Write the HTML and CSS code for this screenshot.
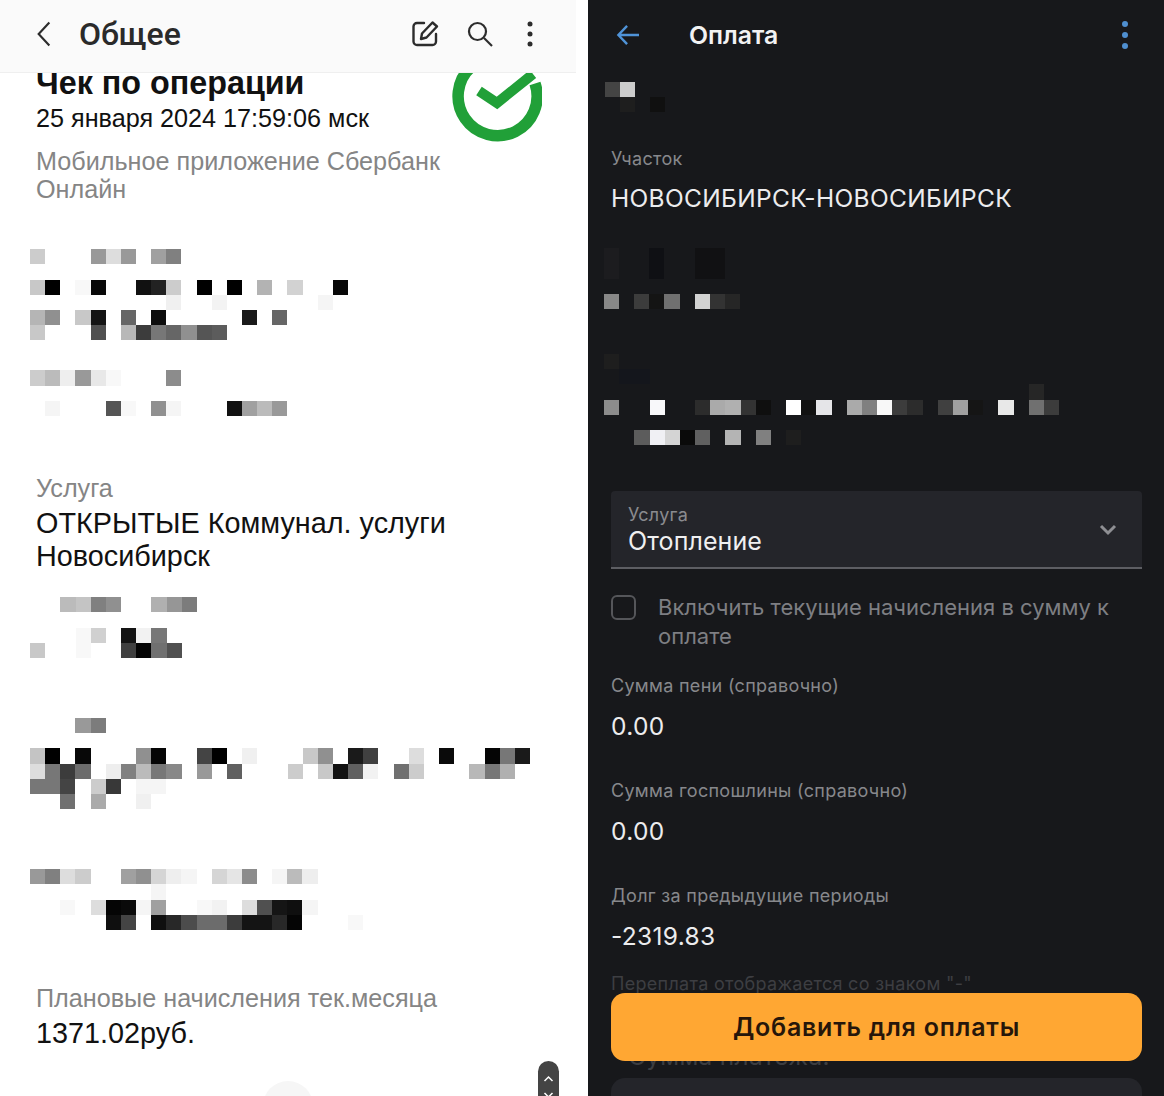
FILE: index.html
```html
<!DOCTYPE html>
<html lang="ru">
<head>
<meta charset="utf-8">
<title>Чек и оплата</title>
<link rel="stylesheet" href="styles.css">
</head>
<body>
<main class="split">
  <section class="light">
    <header class="light-bar">
      <svg class="ic-back" viewBox="0 0 18 30"><path d="M15 2 3 15l12 13" fill="none" stroke="#2c2c2c" stroke-width="2.4"/></svg>
      <h1 class="light-title">Общее</h1>
      <svg class="ic-edit" viewBox="0 0 28 28" fill="none" stroke="#2c2c2c" stroke-width="2.4" stroke-linejoin="round" stroke-linecap="round"><path d="M13 3H6A3.500 3.500 0 0 0 2.500 6.500v15A3.500 3.500 0 0 0 6 25h15.500a3.500 3.500 0 0 0 3.500-3.500V14"/><path d="M11 13.500 21.500 2.500l4.500 4L15.500 17.500 10 19z"/></svg>
      <svg class="ic-search" viewBox="0 0 26 26" fill="none" stroke="#2c2c2c" stroke-width="2.2"><circle cx="10.500" cy="10.500" r="8.500"/><path d="m17 17 8 8"/></svg>
      <svg class="ic-dots" viewBox="0 0 6 26" fill="#2c2c2c"><circle cx="3" cy="3" r="2.500"/><circle cx="3" cy="13" r="2.500"/><circle cx="3" cy="23" r="2.500"/></svg>
    </header>
    <div class="receipt">
      <div class="receipt-head">
        <div class="receipt-text">
          <h2 class="receipt-title">Чек по операции</h2>
          <p class="receipt-date">25 января 2024 17:59:06 мск</p>
        </div>
        <svg class="logo" viewBox="0 0 90 90" fill="none" stroke="#21a038"><path d="M83 31.500A39.500 39.500 0 1 1 19 15" stroke-width="11.500"/><path d="M27 39 45 51 81 22" stroke-width="10"/></svg>
      </div>
      <p class="muted source">Мобильное приложение Сбербанк Онлайн</p>
      <svg class="mosaic m1" viewBox="0 0 21 11" shape-rendering="crispEdges">
        <rect x="0" y="0" width="1" height="1" fill="#ccc"/><rect x="4" y="0" width="1" height="1" fill="#999"/><rect x="5" y="0" width="1" height="1" fill="#ddd"/><rect x="6" y="0" width="1" height="1" fill="#999"/><rect x="8" y="0" width="1" height="1" fill="#a0a0a0"/><rect x="9" y="0" width="1" height="1" fill="#808080"/>
        <rect x="0" y="2" width="1" height="1" fill="#c8c8c8"/><rect x="1" y="2" width="1" height="1" fill="#000"/><rect x="3" y="2" width="1" height="1" fill="#f8f8f8"/><rect x="4" y="2" width="1" height="1" fill="#080808"/><rect x="7" y="2" width="1" height="1" fill="#111"/><rect x="8" y="2" width="1" height="1" fill="#222"/><rect x="9" y="2" width="1" height="1" fill="#ccc"/><rect x="11" y="2" width="1" height="1" fill="#000"/><rect x="13" y="2" width="1" height="1" fill="#000"/><rect x="15" y="2" width="1" height="1" fill="#b3b3b3"/><rect x="17" y="2" width="1" height="1" fill="#d2d2d2"/><rect x="20" y="2" width="1" height="1" fill="#080808"/>
        <rect x="9" y="3" width="1" height="1" fill="#f0f0f0"/><rect x="12" y="3" width="1" height="1" fill="#f3f3f3"/><rect x="19" y="3" width="1" height="1" fill="#f5f5f5"/>
        <rect x="0" y="4" width="1" height="1" fill="#b5b5b5"/><rect x="1" y="4" width="1" height="1" fill="#909090"/><rect x="3" y="4" width="1" height="1" fill="#c8c8c8"/><rect x="4" y="4" width="1" height="1" fill="#141414"/><rect x="6" y="4" width="1" height="1" fill="#666"/><rect x="8" y="4" width="1" height="1" fill="#0d0d0d"/><rect x="14" y="4" width="1" height="1" fill="#1a1a1a"/><rect x="16" y="4" width="1" height="1" fill="#666"/>
        <rect x="0" y="5" width="1" height="1" fill="#c8c8c8"/><rect x="4" y="5" width="1" height="1" fill="#505050"/><rect x="6" y="5" width="1" height="1" fill="#b8b8b8"/><rect x="7" y="5" width="1" height="1" fill="#3c3c3c"/><rect x="8" y="5" width="1" height="1" fill="#777"/><rect x="9" y="5" width="1" height="1" fill="#666"/><rect x="10" y="5" width="1" height="1" fill="#909090"/><rect x="11" y="5" width="1" height="1" fill="#555"/><rect x="12" y="5" width="1" height="1" fill="#5c5c5c"/>
        <rect x="0" y="8" width="1" height="1" fill="#ccc"/><rect x="1" y="8" width="1" height="1" fill="#bbb"/><rect x="2" y="8" width="1" height="1" fill="#eee"/><rect x="3" y="8" width="1" height="1" fill="#999"/><rect x="4" y="8" width="1" height="1" fill="#e8e8e8"/><rect x="5" y="8" width="1" height="1" fill="#f8f8f8"/><rect x="9" y="8" width="1" height="1" fill="#8c8c8c"/>
        <rect x="1" y="10" width="1" height="1" fill="#f5f5f5"/><rect x="5" y="10" width="1" height="1" fill="#555"/><rect x="6" y="10" width="1" height="1" fill="#f8f8f8"/><rect x="8" y="10" width="1" height="1" fill="#909090"/><rect x="9" y="10" width="1" height="1" fill="#f5f5f5"/><rect x="13" y="10" width="1" height="1" fill="#111"/><rect x="14" y="10" width="1" height="1" fill="#a0a0a0"/><rect x="15" y="10" width="1" height="1" fill="#bbb"/><rect x="16" y="10" width="1" height="1" fill="#999"/>
      </svg>
      <p class="muted label-service">Услуга</p>
      <p class="value">ОТКРЫТЫЕ Коммунал. услуги Новосибирск</p>
      <svg class="mosaic m2" viewBox="0 0 11 4" shape-rendering="crispEdges">
        <rect x="2" y="0" width="1" height="1" fill="#bbb"/><rect x="3" y="0" width="1" height="1" fill="#c4c4c4"/><rect x="4" y="0" width="1" height="1" fill="#808080"/><rect x="5" y="0" width="1" height="1" fill="#909090"/><rect x="8" y="0" width="1" height="1" fill="#b0b0b0"/><rect x="9" y="0" width="1" height="1" fill="#969696"/><rect x="10" y="0" width="1" height="1" fill="#7c7c7c"/>
        <rect x="3" y="2" width="1" height="1" fill="#f8f8f8"/><rect x="4" y="2" width="1" height="1" fill="#d0d0d0"/><rect x="6" y="2" width="1" height="1" fill="#141414"/><rect x="7" y="2" width="1" height="1" fill="#f2f2f2"/><rect x="8" y="2" width="1" height="1" fill="#777"/>
        <rect x="0" y="3" width="1" height="1" fill="#c8c8c8"/><rect x="3" y="3" width="1" height="1" fill="#f8f8f8"/><rect x="6" y="3" width="1" height="1" fill="#404040"/><rect x="7" y="3" width="1" height="1" fill="#050505"/><rect x="8" y="3" width="1" height="1" fill="#707070"/><rect x="9" y="3" width="1" height="1" fill="#505050"/>
      </svg>
      <svg class="mosaic m3" viewBox="0 0 33 6" shape-rendering="crispEdges">
        <rect x="3" y="0" width="1" height="1" fill="#999"/><rect x="4" y="0" width="1" height="1" fill="#7c7c7c"/>
        <rect x="0" y="2" width="1" height="1" fill="#c4c4c4"/><rect x="1" y="2" width="1" height="1" fill="#000"/><rect x="3" y="2" width="1" height="1" fill="#080808"/><rect x="7" y="2" width="1" height="1" fill="#909090"/><rect x="8" y="2" width="1" height="1" fill="#050505"/><rect x="11" y="2" width="1" height="1" fill="#444"/><rect x="12" y="2" width="1" height="1" fill="#000"/><rect x="14" y="2" width="1" height="1" fill="#f0f0f0"/><rect x="18" y="2" width="1" height="1" fill="#c8c8c8"/><rect x="19" y="2" width="1" height="1" fill="#909090"/><rect x="21" y="2" width="1" height="1" fill="#1a1a1a"/><rect x="22" y="2" width="1" height="1" fill="#404040"/><rect x="25" y="2" width="1" height="1" fill="#ddd"/><rect x="27" y="2" width="1" height="1" fill="#0a0a0a"/><rect x="30" y="2" width="1" height="1" fill="#050505"/><rect x="31" y="2" width="1" height="1" fill="#777"/><rect x="32" y="2" width="1" height="1" fill="#1a1a1a"/>
        <rect x="0" y="3" width="1" height="1" fill="#ddd"/><rect x="1" y="3" width="1" height="1" fill="#777"/><rect x="2" y="3" width="1" height="1" fill="#3c3c3c"/><rect x="3" y="3" width="1" height="1" fill="#6c6c6c"/><rect x="5" y="3" width="1" height="1" fill="#eee"/><rect x="6" y="3" width="1" height="1" fill="#808080"/><rect x="7" y="3" width="1" height="1" fill="#bbb"/><rect x="8" y="3" width="1" height="1" fill="#777"/><rect x="9" y="3" width="1" height="1" fill="#888"/><rect x="11" y="3" width="1" height="1" fill="#999"/><rect x="13" y="3" width="1" height="1" fill="#606060"/><rect x="17" y="3" width="1" height="1" fill="#ccc"/><rect x="19" y="3" width="1" height="1" fill="#c8c8c8"/><rect x="20" y="3" width="1" height="1" fill="#111"/><rect x="21" y="3" width="1" height="1" fill="#606060"/><rect x="22" y="3" width="1" height="1" fill="#f2f2f2"/><rect x="24" y="3" width="1" height="1" fill="#707070"/><rect x="25" y="3" width="1" height="1" fill="#ccc"/><rect x="29" y="3" width="1" height="1" fill="#b8b8b8"/><rect x="30" y="3" width="1" height="1" fill="#777"/><rect x="31" y="3" width="1" height="1" fill="#b0b0b0"/>
        <rect x="0" y="4" width="1" height="1" fill="#777"/><rect x="1" y="4" width="1" height="1" fill="#777"/><rect x="2" y="4" width="1" height="1" fill="#444"/><rect x="4" y="4" width="1" height="1" fill="#ccc"/><rect x="5" y="4" width="1" height="1" fill="#383838"/><rect x="7" y="4" width="1" height="1" fill="#f5f5f5"/><rect x="8" y="4" width="1" height="1" fill="#f5f5f5"/>
        <rect x="2" y="5" width="1" height="1" fill="#707070"/><rect x="4" y="5" width="1" height="1" fill="#aaa"/><rect x="7" y="5" width="1" height="1" fill="#f0f0f0"/>
      </svg>
      <svg class="mosaic m4" viewBox="0 0 22 4" shape-rendering="crispEdges">
        <rect x="0" y="0" width="1" height="1" fill="#999"/><rect x="1" y="0" width="1" height="1" fill="#808080"/><rect x="2" y="0" width="1" height="1" fill="#ddd"/><rect x="3" y="0" width="1" height="1" fill="#ccc"/><rect x="6" y="0" width="1" height="1" fill="#a0a0a0"/><rect x="7" y="0" width="1" height="1" fill="#909090"/><rect x="8" y="0" width="1" height="1" fill="#d5d5d5"/><rect x="9" y="0" width="1" height="1" fill="#eee"/><rect x="10" y="0" width="1" height="1" fill="#f5f5f5"/><rect x="12" y="0" width="1" height="1" fill="#d5d5d5"/><rect x="13" y="0" width="1" height="1" fill="#e5e5e5"/><rect x="14" y="0" width="1" height="1" fill="#8c8c8c"/><rect x="16" y="0" width="1" height="1" fill="#f5f5f5"/><rect x="17" y="0" width="1" height="1" fill="#bbb"/><rect x="18" y="0" width="1" height="1" fill="#eee"/>
        <rect x="8" y="1" width="1" height="1" fill="#f5f5f5"/>
        <rect x="2" y="2" width="1" height="1" fill="#f8f8f8"/><rect x="4" y="2" width="1" height="1" fill="#ddd"/><rect x="5" y="2" width="1" height="1" fill="#050505"/><rect x="6" y="2" width="1" height="1" fill="#0a0a0a"/><rect x="7" y="2" width="1" height="1" fill="#f5f5f5"/><rect x="8" y="2" width="1" height="1" fill="#a0a0a0"/><rect x="11" y="2" width="1" height="1" fill="#f8f8f8"/><rect x="12" y="2" width="1" height="1" fill="#f2f2f2"/><rect x="14" y="2" width="1" height="1" fill="#ddd"/><rect x="15" y="2" width="1" height="1" fill="#505050"/><rect x="16" y="2" width="1" height="1" fill="#151515"/><rect x="17" y="2" width="1" height="1" fill="#0f0f0f"/><rect x="18" y="2" width="1" height="1" fill="#f5f5f5"/>
        <rect x="5" y="3" width="1" height="1" fill="#0f0f0f"/><rect x="6" y="3" width="1" height="1" fill="#444"/><rect x="8" y="3" width="1" height="1" fill="#0f0f0f"/><rect x="9" y="3" width="1" height="1" fill="#282828"/><rect x="10" y="3" width="1" height="1" fill="#4c4c4c"/><rect x="11" y="3" width="1" height="1" fill="#6c6c6c"/><rect x="12" y="3" width="1" height="1" fill="#6c6c6c"/><rect x="13" y="3" width="1" height="1" fill="#3c3c3c"/><rect x="14" y="3" width="1" height="1" fill="#141414"/><rect x="15" y="3" width="1" height="1" fill="#141414"/><rect x="16" y="3" width="1" height="1" fill="#282828"/><rect x="17" y="3" width="1" height="1" fill="#050505"/><rect x="21" y="3" width="1" height="1" fill="#f8f8f8"/>
      </svg>
      <p class="muted label-plan">Плановые начисления тек.месяца</p>
      <p class="value">1371.02руб.</p>
    </div>
    <span class="home-hint"></span>
    <div class="scroll-pill">
      <svg class="pill-icon" viewBox="0 0 21 35" fill="none" stroke="#fff" stroke-width="1.500"><path d="m6.500 20 4-4 4 4M6.500 32l4 4 4-4"/></svg>
    </div>
  </section>

  <section class="dark">
    <header class="dark-bar">
      <svg class="ic-arrow" viewBox="0 0 26 24" fill="none" stroke="#4f93d8" stroke-width="2.600"><path d="M25 12H3M12 2 2.500 12 12 22"/></svg>
      <h1 class="dark-title">Оплата</h1>
      <svg class="ic-kebab" viewBox="0 0 6 28" fill="#4f8fd0"><circle cx="3" cy="3" r="3"/><circle cx="3" cy="14" r="3"/><circle cx="3" cy="25" r="3"/></svg>
    </header>
    <div class="form">
      <svg class="mosaic r1" viewBox="0 0 6 2" shape-rendering="crispEdges">
        <rect x="0" y="0" width="1" height="1" fill="#444"/><rect x="1" y="0" width="1" height="1" fill="#ccc"/><rect x="1" y="1" width="1" height="1" fill="#1e1e1e"/><rect x="3" y="1" width="1" height="1" fill="#101010"/>
      </svg>
      <p class="d-label participant">Участок</p>
      <p class="d-value">НОВОСИБИРСК-НОВОСИБИРСК</p>
      <svg class="mosaic r2" viewBox="0 0 9 4" shape-rendering="crispEdges">
        <rect x="0" y="0" width="1" height="2" fill="#1c1c1f"/><rect x="3" y="0" width="1" height="2" fill="#0f1014"/><rect x="6" y="0" width="2" height="2" fill="#111113"/>
        <rect x="0" y="3" width="1" height="1" fill="#888"/><rect x="2" y="3" width="1" height="1" fill="#3c3c3c"/><rect x="3" y="3" width="1" height="1" fill="#141414"/><rect x="4" y="3" width="1" height="1" fill="#707070"/><rect x="6" y="3" width="1" height="1" fill="#d2d2d2"/><rect x="7" y="3" width="1" height="1" fill="#333"/><rect x="8" y="3" width="1" height="1" fill="#262626"/>
      </svg>
      <svg class="mosaic r3" viewBox="0 0 30 6" shape-rendering="crispEdges">
        <rect x="0" y="0" width="1" height="1" fill="#1e1e1e"/><rect x="1" y="1" width="2" height="1" fill="#14161c"/><rect x="28" y="2" width="1" height="1" fill="#262626"/>
        <rect x="0" y="3" width="1" height="1" fill="#8c8c8c"/><rect x="3" y="3" width="1" height="1" fill="#f8f8fa"/><rect x="6" y="3" width="1" height="1" fill="#2c2c2c"/><rect x="7" y="3" width="1" height="1" fill="#aaa"/><rect x="8" y="3" width="1" height="1" fill="#b0b0b0"/><rect x="9" y="3" width="1" height="1" fill="#333"/><rect x="10" y="3" width="1" height="1" fill="#0f0f0f"/><rect x="12" y="3" width="1" height="1" fill="#fff"/><rect x="13" y="3" width="1" height="1" fill="#111"/><rect x="14" y="3" width="1" height="1" fill="#e5e5e8"/><rect x="16" y="3" width="1" height="1" fill="#aaa"/><rect x="17" y="3" width="1" height="1" fill="#808080"/><rect x="18" y="3" width="1" height="1" fill="#f8f8f8"/><rect x="19" y="3" width="1" height="1" fill="#3c3c3c"/><rect x="20" y="3" width="1" height="1" fill="#2c2c2c"/><rect x="22" y="3" width="1" height="1" fill="#404040"/><rect x="23" y="3" width="1" height="1" fill="#a0a0a0"/><rect x="24" y="3" width="1" height="1" fill="#151515"/><rect x="26" y="3" width="1" height="1" fill="#e8e8e8"/><rect x="28" y="3" width="1" height="1" fill="#707070"/><rect x="29" y="3" width="1" height="1" fill="#3c3c3c"/>
        <rect x="2" y="5" width="1" height="1" fill="#5c5c5c"/><rect x="3" y="5" width="1" height="1" fill="#f0f0f4"/><rect x="4" y="5" width="1" height="1" fill="#d4d4d4"/><rect x="5" y="5" width="1" height="1" fill="#0a0a0a"/><rect x="6" y="5" width="1" height="1" fill="#606060"/><rect x="8" y="5" width="1" height="1" fill="#b4b4b4"/><rect x="10" y="5" width="1" height="1" fill="#808080"/><rect x="12" y="5" width="1" height="1" fill="#1e1e1e"/>
      </svg>
      <div class="select">
        <div class="select-text">
          <span class="select-label">Услуга</span>
          <span class="select-value">Отопление</span>
        </div>
        <svg class="ic-chevron" viewBox="0 0 18 12" fill="none" stroke="#8e8f93" stroke-width="3"><path d="m2 2 7 7 7-7"/></svg>
      </div>
      <div class="check-row">
        <span class="checkbox"></span>
        <span class="check-text">Включить текущие начисления в сумму к оплате</span>
      </div>
      <p class="d-label f1">Сумма пени (справочно)</p>
      <p class="d-value">0.00</p>
      <p class="d-label f2">Сумма госпошлины (справочно)</p>
      <p class="d-value">0.00</p>
      <p class="d-label f3">Долг за предыдущие периоды</p>
      <p class="d-value">-2319.83</p>
      <p class="note">Переплата отображается со знаком "-"</p>
      <p class="pay-label">Сумма платежа:</p>
      <div class="pay-input"></div>
    </div>
    <button class="add-btn" type="button">Добавить для оплаты</button>
  </section>
</main>
</body>
</html>
```
FILE: styles.css
```css
* { box-sizing: border-box; }
html, body { margin: 0; height: 100%; }
body { background: #fff; overflow: hidden; }
h1, h2, p { margin: 0; font-weight: normal; }

.split { display: grid; grid-template-columns: 588px 576px; height: 1096px; overflow: hidden; }

/* light panel */
.light { position: relative; background: #fff; overflow: hidden; display: flex; flex-direction: column; font-family: "Liberation Sans", Arial, sans-serif; color: #111; }
.light-bar { flex: none; height: 73px; margin-right: 12px; background: #fafafa; border-bottom: 1px solid #efefef; display: flex; align-items: center; padding: 0 43px 4px 36px; position: relative; z-index: 1; }
.ic-back { width: 16px; height: 28px; flex: none; }
.light-title { font-family: Roboto, sans-serif; font-weight: 500; font-size: 32px; color: #2a2a2a; margin-left: 27px; flex: 1; }
.ic-edit { width: 28px; height: 28px; flex: none; }
.ic-search { width: 26px; height: 26px; margin-left: 28px; flex: none; }
.ic-dots { width: 6px; height: 26px; margin-left: 34px; flex: none; }

.receipt { flex: 1; padding: 0 0 0 36px; min-height: 0; }
.receipt-head { display: flex; justify-content: space-between; margin-top: -9px; padding-right: 46px; }
.receipt-text { padding-top: 1px; }
.receipt-title { font-weight: 700; font-size: 32.300px; line-height: 36px; color: #111; }
.receipt-date { font-size: 25.200px; line-height: 32px; margin-top: 1px; color: #111; }
.logo { width: 90px; height: 90px; flex: none; margin-top: -12px; }
.muted { color: #858585; font-size: 25.200px; line-height: 28px; }
.source { width: 440px; margin-top: 5px; }
.value { font-size: 28.800px; line-height: 33px; color: #111; width: 450px; margin-top: 5px; }
.mosaic { display: block; margin-left: -6px; }
.m1 { width: 318px; height: 167px; margin-top: 46px; }
.label-service { margin-top: 58px; }
.m2 { width: 167px; height: 61px; margin-top: 24px; }
.m3 { width: 500px; height: 91px; margin-top: 60px; }
.m4 { width: 333px; height: 61px; margin-top: 60px; }
.label-plan { margin-top: 54px; }

.home-hint { position: absolute; left: 263px; top: 1081px; width: 50px; height: 50px; border-radius: 50%; background: #f6f6f6; }
.scroll-pill { position: absolute; left: 538px; top: 1061px; width: 21px; height: 50px; border-radius: 11px; background: #444; }
.pill-icon { display: block; width: 21px; height: 35px; }

/* dark panel */
.dark { position: relative; background: #17181b; overflow: hidden; font-family: Inter, sans-serif; color: #f2f2f3; }
.dark-bar { height: 70px; display: flex; align-items: center; padding: 0 36px 0 28px; }
.ic-arrow { width: 24px; height: 22px; flex: none; }
.dark-title { font-weight: 600; font-size: 24.800px; margin-left: 49px; flex: 1; }
.ic-kebab { width: 6px; height: 28px; flex: none; }

.form { padding: 0 22px 0 23px; }
.form .mosaic { margin-left: -7px; }
.r1 { width: 91px; height: 30px; margin-top: 12px; }
.d-label { font-size: 18px; line-height: 24px; color: #87888c; letter-spacing: .3px; }
.d-value { font-size: 24.500px; line-height: 32px; color: #ececee; margin-top: 12px; letter-spacing: .33px; }
.participant { margin-top: 35px; margin-bottom: -1px; }
.r2 { width: 136px; height: 61px; margin-top: 34px; }
.r3 { width: 455px; height: 91px; margin-top: 45px; }
.select { height: 78px; margin-top: 46px; background: #24252a; border-radius: 4px 4px 0 0; border-bottom: 2px solid #5d5e63; display: flex; align-items: center; justify-content: space-between; padding: 2px 25px 0 17px; }
.select-text { display: flex; flex-direction: column; }
.select-label { font-size: 18px; line-height: 22px; color: #8a8b8f; letter-spacing: .3px; }
.select-value { font-size: 25px; line-height: 30px; color: #f0f0f1; letter-spacing: .1px; }
.ic-chevron { width: 18px; height: 12px; flex: none; }
.check-row { display: flex; gap: 22px; margin-top: 24px; align-items: flex-start; }
.checkbox { flex: none; width: 25px; height: 25px; border: 2px solid #55565a; border-radius: 6px; margin-top: 2px; }
.check-text { font-size: 22px; line-height: 29px; color: #7e7f83; }
.f1 { margin-top: 23px; }
.f2 { margin-top: 36px; line-height: 25px; }
.f3 { margin-top: 37px; }
.note { font-size: 18px; line-height: 24px; color: #3d3e42; margin-top: 20px; letter-spacing: .3px; }
.pay-label { font-size: 24.500px; line-height: 30px; color: #3c3d41; margin: 45px 0 0 17px; letter-spacing: .3px; }
.pay-input { height: 60px; margin-top: 7px; background: #24252a; border-radius: 14px; }
.add-btn { position: absolute; left: 23px; right: 22px; bottom: 35px; height: 68px; border: 0; border-radius: 14px; background: #ffa733; color: #26160a; font-family: Inter, sans-serif; font-weight: 600; font-size: 25px; letter-spacing: .76px; }
```
